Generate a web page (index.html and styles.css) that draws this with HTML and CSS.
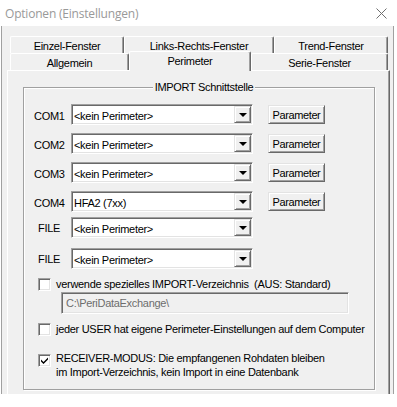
FILE: index.html
```html
<!DOCTYPE html>
<html lang="de">
<head>
    <meta charset="UTF-8">
    <meta name="viewport" content="width=device-width, initial-scale=1.0">
    <title>Optionen (Einstellungen)</title>
    <link rel="stylesheet" href="styles.css">
</head>
<body>
    <div class="window">
        <div class="titlebar">
            <span class="title">Optionen (Einstellungen)</span>
            <svg class="close" width="11" height="11" viewBox="0 0 11 11">
                <path d="M0.5 0.5 L10.5 10.5 M10.5 0.5 L0.5 10.5" stroke="#6f6f6f" stroke-width="1" fill="none"/>
            </svg>
        </div>

        <div class="client">
            <div class="tab-row back">
                <div class="tab w-einzel">Einzel-Fenster</div>
                <div class="tab w-links">Links-Rechts-Fenster</div>
                <div class="tab w-trend">Trend-Fenster</div>
            </div>
            <div class="tab-row front">
                <div class="tab w-allg">Allgemein</div>
                <div class="tab w-peri selected">Perimeter</div>
                <div class="tab w-serie">Serie-Fenster</div>
            </div>

            <div class="panel">
                <fieldset class="group">
                    <legend>IMPORT Schnittstelle</legend>

                    <div class="ports">
                        <div class="port-row">
                            <span class="port-label">COM1</span>
                            <div class="combo"><span class="combo-text">&lt;kein Perimeter&gt;</span><span class="combo-btn"><span class="arrow"></span></span></div>
                            <button class="param">Parameter</button>
                        </div>
                        <div class="port-row">
                            <span class="port-label">COM2</span>
                            <div class="combo"><span class="combo-text">&lt;kein Perimeter&gt;</span><span class="combo-btn"><span class="arrow"></span></span></div>
                            <button class="param">Parameter</button>
                        </div>
                        <div class="port-row">
                            <span class="port-label">COM3</span>
                            <div class="combo"><span class="combo-text">&lt;kein Perimeter&gt;</span><span class="combo-btn"><span class="arrow"></span></span></div>
                            <button class="param">Parameter</button>
                        </div>
                        <div class="port-row tight">
                            <span class="port-label">COM4</span>
                            <div class="combo"><span class="combo-text">HFA2 (7xx)</span><span class="combo-btn"><span class="arrow"></span></span></div>
                            <button class="param">Parameter</button>
                        </div>
                        <div class="port-row wide">
                            <span class="port-label file">FILE</span>
                            <div class="combo"><span class="combo-text">&lt;kein Perimeter&gt;</span><span class="combo-btn"><span class="arrow"></span></span></div>
                        </div>
                        <div class="port-row">
                            <span class="port-label file">FILE</span>
                            <div class="combo"><span class="combo-text">&lt;kein Perimeter&gt;</span><span class="combo-btn"><span class="arrow"></span></span></div>
                        </div>
                    </div>

                    <div class="check-row first">
                        <span class="checkbox"></span>
                        <span class="check-text">verwende spezielles IMPORT-Verzeichnis &nbsp;(AUS: Standard)</span>
                    </div>
                    <div class="path-field">C:\PeriDataExchange\</div>

                    <div class="check-row second">
                        <span class="checkbox"></span>
                        <span class="check-text">jeder USER hat eigene Perimeter-Einstellungen auf dem Computer</span>
                    </div>

                    <div class="check-row third">
                        <span class="checkbox">
                            <svg width="7" height="7" viewBox="0 0 7 7">
                                <path d="M0 2.5 L2.5 5 L7 0.5 L7 2.5 L2.5 7 L0 4.5 Z" fill="#000"/>
                            </svg>
                        </span>
                        <span class="check-text">RECEIVER-MODUS: Die empfangenen Rohdaten bleiben<br>im Import-Verzeichnis, kein Import in eine Datenbank</span>
                    </div>
                </fieldset>
            </div>
        </div>
    </div>
</body>
</html>
```

FILE: styles.css
```css
* {
    box-sizing: border-box;
}
body {
    margin: 0;
    background: #fff;
    font-family: "Liberation Sans", Arial, sans-serif;
    font-size: 11px;
    letter-spacing: -0.3px;
    color: #000;
}
.window {
    width: 397px;
    height: 407px;
    overflow: hidden;
}

/* title bar */
.titlebar {
    height: 26px;
    display: flex;
    align-items: center;
    justify-content: space-between;
    padding: 0 10px 0 5px;
    background: #fff;
}
.title {
    font-family: "Open Sans", "Noto Sans", sans-serif;
    font-size: 12px;
    letter-spacing: -0.2px;
    color: #999;
}
.close {
    display: block;
}

/* dialog body */
.client {
    height: 368px;
    margin: 0 3px 0 1px;
    padding-top: 10px;
    background: #f0f0f0;
    border-left: 1px solid #a0a0a0;
    border-right: 1px solid #a0a0a0;
    overflow: hidden;
}

/* tabs */
.tab-row {
    display: flex;
    margin-left: 8px;
}
.tab-row.back {
    height: 17px;
}
.tab-row.front {
    height: 17px;
    align-items: flex-end;
}
.tab {
    height: 17px;
    display: flex;
    align-items: center;
    justify-content: center;
    padding-top: 1px;
    background: #f0f0f0;
    border-top: 1px solid #fff;
    border-left: 1px solid #fff;
    border-right: 1px solid #696969;
    border-radius: 2px 2px 0 0;
    box-shadow: inset -1px 0 0 #a0a0a0;
}
.tab.selected {
    position: relative;
    z-index: 1;
    height: 20px;
    margin-bottom: -1px;
    padding-bottom: 2px;
}
.w-einzel { width: 114px; }
.w-links { width: 150px; }
.w-trend { width: 114px; }
.w-allg { width: 119px; }
.w-peri { width: 122px; }
.w-serie { width: 137px; }

.panel {
    width: 383px;
    height: 330px;
    margin-left: 5px;
    border-top: 1px solid #fff;
    border-left: 1px solid #fff;
    border-right: 1px solid #696969;
    box-shadow: inset -1px 0 0 #a0a0a0;
}

/* group box */
.group {
    width: 352px;
    height: 309px;
    margin: 10px 0 0 15px;
    padding: 0 0 0 10px;
    border: 1px solid #a0a0a0;
    box-shadow: inset 1px 1px 0 #fff, 1px 1px 0 #fff;
    min-width: 0;
}
.group legend {
    margin: 0 auto;
    padding: 0 2px;
    background: #f0f0f0;
    line-height: 13px;
}

.ports {
    margin-top: 10px;
}
.port-row {
    display: flex;
    align-items: center;
    height: 21px;
    margin-bottom: 8px;
}
.port-row.tight {
    margin-bottom: 5px;
}
.port-row.wide {
    margin-bottom: 10px;
}
.port-label {
    width: 37px;
    padding-top: 2px;
}
.port-label.file {
    padding-left: 4px;
    padding-top: 0;
}

.combo {
    width: 182px;
    height: 21px;
    display: flex;
    align-items: center;
    justify-content: space-between;
    padding: 1px 1px 1px 2px;
    background: #fff;
    border: 1px solid;
    border-color: #a0a0a0 #fff #fff #a0a0a0;
    box-shadow: inset 1px 1px 0 #696969, inset -1px -1px 0 #e3e3e3;
}
.combo-text {
    padding-top: 2px;
}
.combo-btn {
    width: 17px;
    height: 17px;
    display: flex;
    align-items: center;
    justify-content: center;
    background: #f0f0f0;
    border: 1px solid;
    border-color: #e3e3e3 #696969 #696969 #e3e3e3;
    box-shadow: inset 1px 1px 0 #fff, inset -1px -1px 0 #a0a0a0;
}
.arrow {
    width: 0;
    height: 0;
    border-left: 4px solid transparent;
    border-right: 4px solid transparent;
    border-top: 4px solid #000;
    margin-top: 1px;
}

.param {
    width: 57px;
    height: 19px;
    margin-left: 15px;
    padding: 0;
    font-family: inherit;
    font-size: 11px;
    letter-spacing: -0.4px;
    color: #000;
    background: #f0f0f0;
    border: 1px solid;
    border-color: #e3e3e3 #696969 #696969 #e3e3e3;
    box-shadow: inset 1px 1px 0 #fff, inset -1px -1px 0 #a0a0a0;
}

/* checkboxes */
.check-row {
    display: flex;
    align-items: center;
    margin-left: 4px;
}
.check-row.first {
    margin-top: 3px;
}
.check-row.second {
    margin-top: 8px;
}
.check-row.third {
    align-items: flex-start;
    margin-top: 15px;
}
.check-row.third .checkbox {
    margin-top: 3px;
}
.checkbox {
    width: 13px;
    height: 13px;
    flex: none;
    display: flex;
    align-items: center;
    justify-content: center;
    margin-right: 5px;
    background: #fff;
    border: 1px solid;
    border-color: #a0a0a0 #fff #fff #a0a0a0;
    box-shadow: inset 1px 1px 0 #696969, inset -1px -1px 0 #e3e3e3;
}
.check-text {
    line-height: 14px;
    white-space: nowrap;
}

.path-field {
    width: 288px;
    height: 22px;
    margin: 1px 0 0 27px;
    padding: 4px 0 0 4px;
    color: #6d6d6d;
    background: #f0f0f0;
    border: 1px solid;
    border-color: #a0a0a0 #fff #fff #a0a0a0;
    box-shadow: inset 1px 1px 0 #696969, inset -1px -1px 0 #e3e3e3;
}
```
